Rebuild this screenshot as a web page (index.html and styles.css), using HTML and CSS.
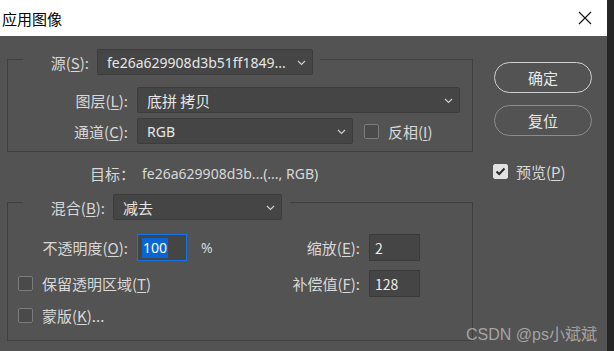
FILE: index.html
```html
<!DOCTYPE html>
<html lang="zh-CN">
<head>
  <meta charset="UTF-8" />
  <title>应用图像</title>
  <link rel="stylesheet" href="styles.css">
</head>
<body>
  <div class="window">
    <div class="titlebar">
      <span class="title">应用图像</span>
      <svg class="close" width="14" height="14" viewBox="0 0 14 14">
        <path d="M1 1 L13 13 M13 1 L1 13" stroke="#111" stroke-width="1.1" fill="none"/>
      </svg>
    </div>

    <div class="dialog">
      <div class="main">
        <div class="group">
          <div class="group-head head-source">
            <span class="head-label">源(<u>S</u>):</span>
            <div class="select select-source">
              <span>fe26a629908d3b51ff1849...</span>
              <svg class="chev" width="9" height="6" viewBox="0 0 9 6"><path d="M1 1 L4.5 4.5 L8 1" stroke="#cfcfcf" stroke-width="1.2" fill="none"/></svg>
            </div>
          </div>
          <div class="row row-layer">
            <span class="row-label">图层(<u>L</u>):</span>
            <div class="select select-layer">
              <span>底拼 拷贝</span>
              <svg class="chev" width="9" height="6" viewBox="0 0 9 6"><path d="M1 1 L4.5 4.5 L8 1" stroke="#cfcfcf" stroke-width="1.2" fill="none"/></svg>
            </div>
          </div>
          <div class="row row-channel">
            <span class="row-label">通道(<u>C</u>):</span>
            <div class="select select-channel">
              <span>RGB</span>
              <svg class="chev" width="9" height="6" viewBox="0 0 9 6"><path d="M1 1 L4.5 4.5 L8 1" stroke="#cfcfcf" stroke-width="1.2" fill="none"/></svg>
            </div>
            <label class="check check-invert"><span class="box"></span>反相(<u>I</u>)</label>
          </div>
        </div>

        <div class="target">
          <span class="target-label">目标：</span>
          <span class="target-value">fe26a629908d3b...(..., RGB)</span>
        </div>

        <div class="group group-blend">
          <div class="group-head head-blend">
            <span class="head-label">混合(<u>B</u>):</span>
            <div class="select select-blend">
              <span>减去</span>
              <svg class="chev" width="9" height="6" viewBox="0 0 9 6"><path d="M1 1 L4.5 4.5 L8 1" stroke="#cfcfcf" stroke-width="1.2" fill="none"/></svg>
            </div>
          </div>
          <div class="blend-grid">
            <div class="cell">
              <span class="row-label">不透明度(<u>O</u>):</span>
              <div class="field field-active"><span class="selected">100</span></div>
              <span class="unit">%</span>
            </div>
            <div class="cell cell-right">
              <span>缩放(<u>E</u>):</span>
              <div class="field">2</div>
            </div>
            <div class="cell">
              <label class="check check-left"><span class="box"></span>保留透明区域(<u>T</u>)</label>
            </div>
            <div class="cell cell-right">
              <span>补偿值(<u>F</u>):</span>
              <div class="field">128</div>
            </div>
            <div class="cell">
              <label class="check check-left"><span class="box"></span>蒙版(<u>K</u>)...</label>
            </div>
          </div>
        </div>
      </div>

      <div class="side">
        <button class="btn btn-default">确定</button>
        <button class="btn">复位</button>
        <label class="check check-preview">
          <span class="box box-on">
            <svg width="11" height="9" viewBox="0 0 11 9"><path d="M1.5 4.5 L4.2 7 L9.5 1.5" stroke="#2b2b2b" stroke-width="2" fill="none"/></svg>
          </span>预览(<u>P</u>)
        </label>
      </div>
    </div>

    <div class="watermark">CSDN @ps小斌斌</div>
  </div>
</body>
</html>
```

FILE: styles.css
```css
body {
  margin: 0;
  padding: 0;
  background: #262626;
  font-family: "Noto Sans", "Noto Sans CJK SC", sans-serif;
  font-size: 15px;
  color: #d8d8d8;
}

u {
  text-underline-offset: 2px;
}

.window {
  position: relative;
  width: 607px;
  height: 351px;
  background: #535353;
  overflow: hidden;
}

.titlebar {
  height: 36px;
  background: #fff;
  display: flex;
  align-items: center;
  justify-content: space-between;
  padding: 0 15px 0 2px;
}

.title {
  font-family: "Noto Sans CJK SC", sans-serif;
  color: #000;
  font-size: 15px;
  margin-top: 1px;
}

.dialog {
  display: flex;
  padding: 23px 0 0 7px;
}

.main {
  width: 466px;
}

.group {
  border: 1px solid #3f3f3f;
  padding: 0 0 7px;
}

.group-head {
  display: flex;
  align-items: center;
  width: fit-content;
  margin: -11px 0 0 15px;
  padding-right: 7px;
  background: #535353;
}

.head-label {
  width: 66px;
  text-align: right;
  margin-right: 8px;
  font-family: "Noto Sans CJK SC", sans-serif;
}

.select {
  box-sizing: border-box;
  height: 26px;
  background: #454545;
  border: 1px solid #3c3c3c;
  border-radius: 2px;
  display: flex;
  align-items: center;
  justify-content: space-between;
  padding: 0 6px 0 9px;
  color: #e6e6e6;
}

.select span {
  white-space: nowrap;
}

.select-source {
  width: 216px;
  font-size: 14px;
}

.chev {
  flex: none;
  margin-top: 1px;
}

.row {
  display: flex;
  align-items: center;
  height: 26px;
}

.row-layer {
  margin-top: 12px;
}

.row-channel {
  margin-top: 5px;
}

.row-label {
  width: 120px;
  text-align: right;
  margin-right: 9px;
  font-family: "Noto Sans CJK SC", sans-serif;
}

.select-layer {
  width: 323px;
  font-family: "Noto Sans CJK SC", sans-serif;
}

.select-channel {
  width: 216px;
  font-size: 14px;
}

.check {
  display: flex;
  align-items: center;
  font-family: "Noto Sans CJK SC", sans-serif;
}

.box {
  box-sizing: border-box;
  width: 15px;
  height: 15px;
  border: 1px solid #7c7c7c;
  border-radius: 2px;
  background: #4a4a4a;
  margin-right: 9px;
  display: flex;
  align-items: center;
  justify-content: center;
}

.box-on {
  background: #e2e2e2;
  border-color: #e2e2e2;
}

.check-invert {
  margin-left: 11px;
}

.target {
  display: flex;
  align-items: center;
  height: 20px;
  margin-top: 11px;
  padding-left: 83px;
}

.target-label {
  font-family: "Noto Sans CJK SC", sans-serif;
  margin-right: 7px;
}

.target-value {
  font-size: 14px;
}

.group-blend {
  margin-top: 19px;
  padding: 0 0 16px;
}

.head-blend {
  margin-top: -9px;
  padding-right: 8px;
}

.head-blend .head-label {
  width: 82px;
}

.select-blend {
  width: 169px;
  font-family: "Noto Sans CJK SC", sans-serif;
}

.blend-grid {
  display: grid;
  grid-template-columns: 280px 132px;
  grid-template-rows: 27px 27px 18px;
  row-gap: 9px;
  margin-top: 14px;
}

.cell {
  display: flex;
  align-items: center;
}

.cell-right {
  justify-content: flex-end;
  font-family: "Noto Sans CJK SC", sans-serif;
}

.cell-right span {
  margin-right: 9px;
}

.field {
  box-sizing: border-box;
  width: 51px;
  height: 27px;
  background: #454545;
  border: 1px solid #3a3a3a;
  display: flex;
  align-items: center;
  padding-left: 5px;
  font-size: 14px;
  color: #ececec;
}

.field-active {
  width: 50px;
  border-color: #1473e6;
  padding-left: 4px;
}

.selected {
  background: #0a64d4;
  color: #fff;
  line-height: 20px;
  padding: 0 1px;
}

.unit {
  margin-left: 14px;
  font-size: 14px;
}

.check-left {
  margin-left: 10px;
}

.side {
  display: flex;
  flex-direction: column;
  align-items: flex-start;
  margin: 3px 0 0 21px;
}

.btn {
  width: 98px;
  height: 31px;
  border-radius: 16px;
  background: transparent;
  border: 1px solid #8c8c8c;
  color: #e8e8e8;
  font-family: "Noto Sans CJK SC", sans-serif;
  font-size: 15px;
  padding: 0;
}

.btn-default {
  border-color: #d0d0d0;
}

.btn + .btn {
  margin-top: 12px;
}

.check-preview {
  margin: 25px 0 0 -1px;
}

.check-preview .box {
  margin-right: 8px;
}

.watermark {
  position: absolute;
  left: 466px;
  top: 321px;
  font-family: "Liberation Sans", "Noto Sans CJK SC", sans-serif;
  font-size: 16px;
  color: rgba(220, 220, 220, 0.6);
}
```
